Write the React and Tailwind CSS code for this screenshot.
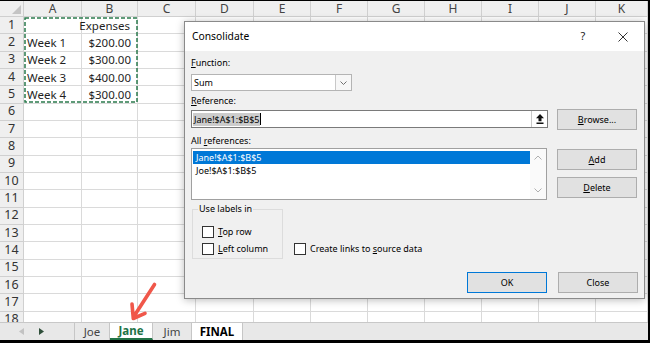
import React from "react";

const cols = ["A", "B", "C", "D", "E", "F", "G", "H", "I", "J", "K"];
const data = [
  ["", "Expenses"],
  ["Week 1", "$200.00"],
  ["Week 2", "$300.00"],
  ["Week 3", "$400.00"],
  ["Week 4", "$300.00"],
];

const U = ({ children }) => <span className="underline underline-offset-[1px]">{children}</span>;

const Btn = ({ children, focused }) => (
  <div
    className={
      "w-[80px] h-[21px] flex items-center justify-center bg-[#e1e1e1] border text-[9px] text-black " +
      (focused ? "border-[#0078d7]" : "border-[#adadad]")
    }
  >
    {children}
  </div>
);

const Check = ({ children }) => (
  <div className="flex items-center h-[12px]">
    <div className="w-[12px] h-[12px] border border-[#333] bg-white" />
    <span className="ml-[4px] text-[9px] leading-[12px] text-black">{children}</span>
  </div>
);

const Sheet = () => (
  <div className="grid grid-cols-[24px_58px_56px_58px_58px_57px_57px_57px_57px_57px_57px_1fr] grid-rows-[16px] auto-rows-[17.33px] font-['Noto_Sans',sans-serif]">
    {/* select-all corner */}
    <div className="bg-[#efefef] border-r border-b border-[#cfcfcf] flex items-end justify-end pr-[2px] pb-[2px]">
      <svg width="9" height="9" viewBox="0 0 9 9">
        <path d="M9 0 L9 9 L0 9 Z" fill="#c4c4c4" />
      </svg>
    </div>
    {cols.map((c) => (
      <div
        key={c}
        className="bg-[#efefef] border-r border-b border-[#d0d0d0] flex items-center justify-center text-[12px] text-[#444]"
      >
        {c}
      </div>
    ))}
    {Array.from({ length: 18 }).map((_, i) => (
      <React.Fragment key={i}>
        <div className="bg-[#efefef] border-r border-b border-[#d0d0d0] flex items-center justify-center text-[12.5px] text-[#333]">
          {i + 1}
        </div>
        {cols.map((c, j) => {
          const v = data[i] ? data[i][j] : "";
          let align = "justify-start pl-[3px]";
          if (j === 1) align = i === 0 ? "justify-end pr-[7px]" : "justify-end pr-[6px]";
          return (
            <div
              key={c}
              className={"bg-white border-r border-b border-[#dadada] flex items-center text-[11.5px] text-[#1f1f1f] whitespace-nowrap " + align}
            >
              {v}
            </div>
          );
        })}
      </React.Fragment>
    ))}
  </div>
);

const TabBar = () => (
  <div className="h-[18px] bg-[#e8e8e8] border-t border-[#c8c8c8] flex items-stretch font-['Noto_Sans',sans-serif] text-[11.5px]">
    <div className="w-[74px] flex items-center">
      <svg className="ml-[19px]" width="5" height="7" viewBox="0 0 5 7">
        <path d="M5 0 L5 7 L0 3.5 Z" fill="#c2c2c2" />
      </svg>
      <svg className="ml-[15px]" width="5" height="7" viewBox="0 0 5 7">
        <path d="M0 0 L0 7 L5 3.5 Z" fill="#2f4f3a" />
      </svg>
    </div>
    <div className="w-[36px] border-l border-r border-[#c6c6c6] flex items-center justify-center text-[#444]">Joe</div>
    <div className="w-[43px] bg-white border-r border-[#c6c6c6] border-b-2 border-b-[#217346] flex items-center justify-center font-bold text-[#217346]">
      Jane
    </div>
    <div className="w-[39px] border-r border-[#c6c6c6] flex items-center justify-center text-[#444]">Jim</div>
    <div className="w-[51px] bg-white border-r border-[#c6c6c6] flex items-center justify-center font-bold text-black">
      FINAL
    </div>
  </div>
);

const Dialog = () => (
  <div className="absolute left-[184px] top-[21px] w-[461px] h-[278px] border border-[#8a8a8a] bg-[#f0f0f0] shadow-[0_1px_8px_rgba(0,0,0,0.28)] flex flex-col font-['Noto_Sans',sans-serif]">
    <div className="h-[29px] bg-white flex items-center pl-[7px] pr-[1px]">
      <span className="text-[10.3px] text-black">Consolidate</span>
      <span className="ml-auto w-[40px] text-center text-[11px] text-[#222]">?</span>
      <div className="w-[40px] flex justify-center">
        <svg width="10" height="10" viewBox="0 0 10 10">
          <path d="M0.5 0.5 L9.5 9.5 M9.5 0.5 L0.5 9.5" stroke="#333" strokeWidth="1" />
        </svg>
      </div>
    </div>

    <div className="flex-1 pl-[6px] pr-[6px] pt-[6px] text-[9px] text-black">
      <div className="leading-[12px]">
        <U>F</U>unction:
      </div>
      <div className="mt-[5px] w-[161px] h-[17px] border border-[#b4b4b4] bg-white flex">
        <div className="flex-1 pl-[2px] leading-[15px]">Sum</div>
        <div className="w-[16px] border-l border-[#c8c8c8] bg-[#f7f7f7] flex items-center justify-center">
          <svg width="7" height="4" viewBox="0 0 7 4">
            <path d="M0.5 0.5 L3.5 3.5 L6.5 0.5" stroke="#707070" fill="none" strokeWidth="1" />
          </svg>
        </div>
      </div>

      <div className="mt-[4px] leading-[12px]">
        <U>R</U>eference:
      </div>
      <div className="mt-[2px] h-[21px] flex items-start">
        <div className="mt-[1px] w-[357px] h-[18px] border border-[#7a7a7a] bg-white flex">
          <div className="flex-1 flex items-center pl-[1px]">
            <span className="bg-[#cccccc] px-[1px] leading-[13px]">Jane!$A$1:$B$5</span>
            <span className="w-[1px] h-[12px] bg-black" />
          </div>
          <div className="w-[16px] border-l border-[#c8c8c8] flex items-center justify-center">
            <svg width="8" height="10" viewBox="0 0 8 10">
              <path d="M4 0 L8 4.2 L5.5 4.2 L5.5 7.2 L2.5 7.2 L2.5 4.2 L0 4.2 Z" fill="#111" />
              <rect x="0.5" y="8.5" width="7" height="1.5" fill="#111" />
            </svg>
          </div>
        </div>
        <div className="ml-[9px]">
          <Btn>
            <U>B</U>rowse...
          </Btn>
        </div>
      </div>

      <div className="mt-[5px] leading-[12px]">
        All <U>r</U>eferences:
      </div>
      <div className="mt-[1px] flex items-start">
        <div className="w-[356px] h-[52px] border border-[#a0a0a0] bg-white flex">
          <div className="flex-1 pl-[1px] pt-[2px]">
            <div className="h-[13px] bg-[#0078d7] text-white pl-[3px] leading-[13px]">Jane!$A$1:$B$5</div>
            <div className="h-[13px] pl-[3px] leading-[13px]">Joe!$A$1:$B$5</div>
          </div>
          <div className="w-[16px] bg-[#fafafa] flex flex-col items-center justify-between py-[6px]">
            <svg width="8" height="5" viewBox="0 0 8 5">
              <path d="M0.5 4.5 L4 1 L7.5 4.5" stroke="#b0b0b0" fill="none" strokeWidth="1" />
            </svg>
            <svg width="8" height="5" viewBox="0 0 8 5">
              <path d="M0.5 0.5 L4 4 L7.5 0.5" stroke="#b0b0b0" fill="none" strokeWidth="1" />
            </svg>
          </div>
        </div>
        <div className="ml-[10px] flex flex-col">
          <div className="mt-[1px]">
            <Btn>
              <U>A</U>dd
            </Btn>
          </div>
          <div className="mt-[7px]">
            <Btn>
              <U>D</U>elete
            </Btn>
          </div>
        </div>
      </div>

      <div className="mt-[9px] flex items-end">
        <div className="ml-[1px] w-[91px] h-[50px] border border-[#dcdcdc] relative pl-[9px] pt-[16px]">
          <span className="absolute left-[5px] top-[-7px] bg-[#f0f0f0] px-[1px] leading-[12px]">Use labels in</span>
          <Check>
            <U>T</U>op row
          </Check>
          <div className="mt-[5px]">
            <Check>
              <U>L</U>eft column
            </Check>
          </div>
        </div>
        <div className="ml-[11px] mb-[4px]">
          <Check>
            Create links to <U>s</U>ource data
          </Check>
        </div>
      </div>

      <div className="mt-[13px] flex justify-end gap-[11px]">
        <Btn focused>OK</Btn>
        <Btn>Close</Btn>
      </div>
    </div>
  </div>
);

export default function App() {
  return (
    <div className="w-[650px] h-[343px] bg-black relative overflow-hidden">
      <div className="mt-[1px] w-[648px] h-[339px] flex flex-col bg-white">
        <div className="h-[321px] overflow-hidden">
          <Sheet />
        </div>
        <TabBar />
      </div>

      {/* copy marquee around A1:B5 */}
      <svg className="absolute left-[24px] top-[17px]" width="114" height="86" viewBox="0 0 114 86">
        <rect x="1" y="1" width="112" height="84" fill="none" stroke="#2a7a4c" strokeWidth="1.5" strokeDasharray="4 2" />
      </svg>

      <Dialog />

      {/* red pointer arrow */}
      <svg className="absolute left-[124px] top-[280px]" width="38" height="42" viewBox="0 0 38 42">
        <path
          d="M30.5 4.5 L9.5 37 M8 24 L9.3 38.5 L21 33.3"
          stroke="#f0574a"
          strokeWidth="3.6"
          strokeLinecap="round"
          strokeLinejoin="round"
          fill="none"
        />
      </svg>
    </div>
  );
}
